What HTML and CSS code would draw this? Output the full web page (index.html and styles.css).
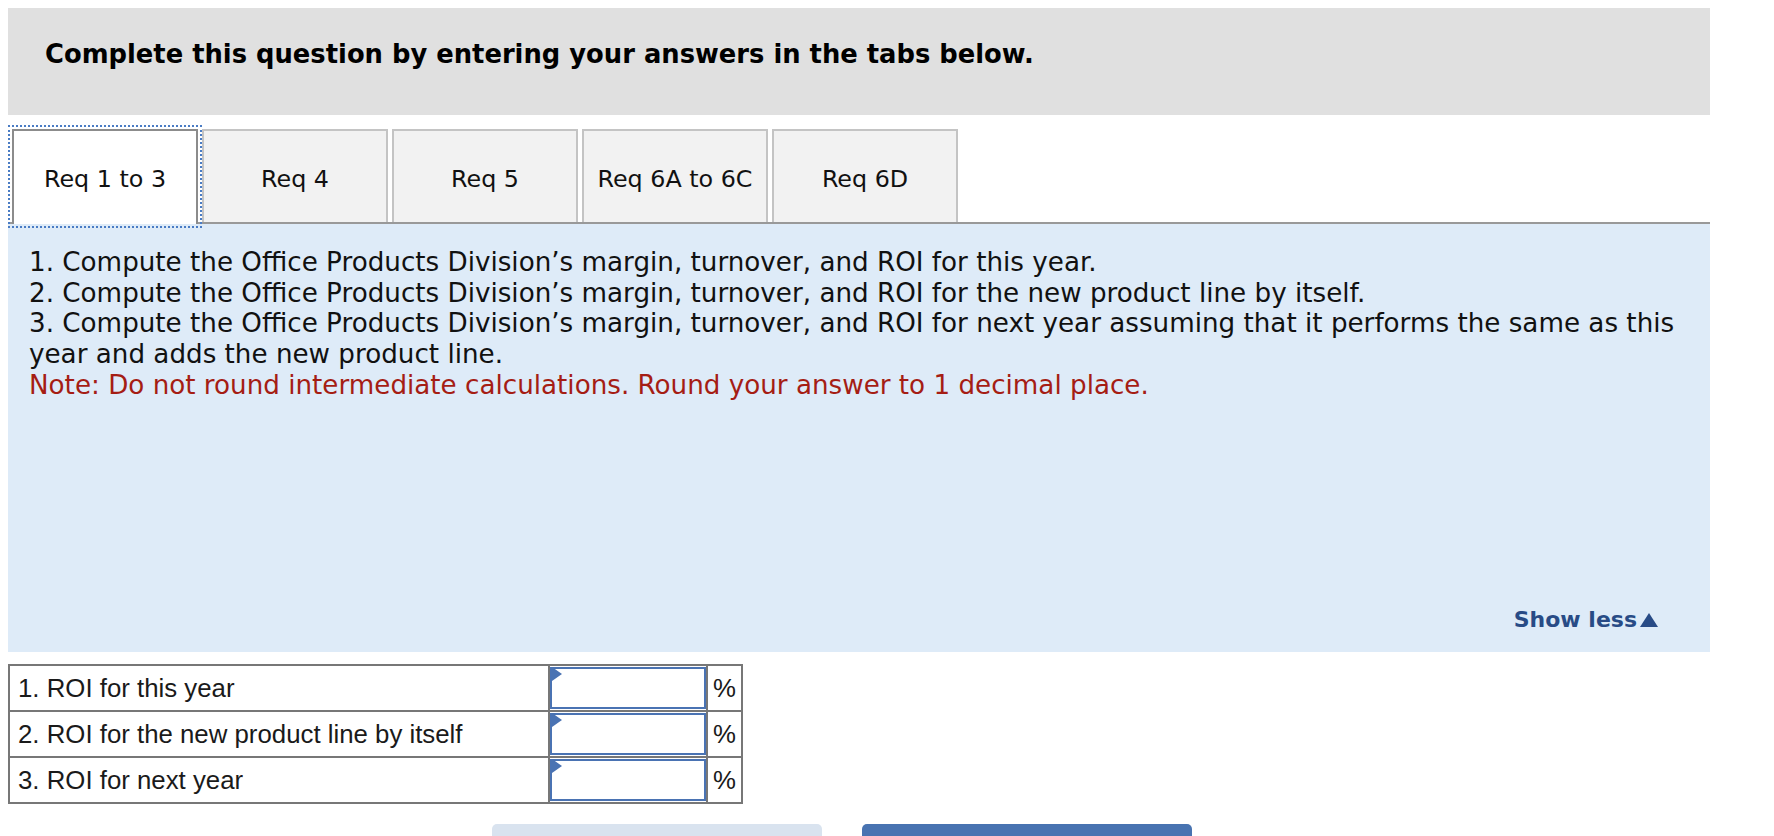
FILE: index.html
```html
<!DOCTYPE html>
<html lang="en">
<head>
<meta charset="utf-8">
<title>Req 1 to 3</title>
<link rel="stylesheet" href="styles.css">
</head>
<body>
<div class="instructions">
  <h1 class="instructions-title">Complete this question by entering your answers in the tabs below.</h1>
</div>

<div class="tabs" role="tablist">
  <button class="tab tab-active" role="tab">Req 1 to 3</button>
  <button class="tab" role="tab">Req 4</button>
  <button class="tab" role="tab">Req 5</button>
  <button class="tab" role="tab">Req 6A to 6C</button>
  <button class="tab" role="tab">Req 6D</button>
</div>

<div class="panel">
  <div class="panel-text">
    <p class="req-line">1. Compute the Office Products Division’s margin, turnover, and ROI for this year.</p>
    <p class="req-line">2. Compute the Office Products Division’s margin, turnover, and ROI for the new product line by itself.</p>
    <p class="req-line">3. Compute the Office Products Division’s margin, turnover, and ROI for next year assuming that it performs the same as this year and adds the new product line.</p>
    <p class="req-line note">Note: Do not round intermediate calculations. Round your answer to 1 decimal place.</p>
  </div>
  <div class="show-less-row">
    <a class="show-less" href="#">Show less<svg class="show-less-icon" width="18" height="14" viewBox="0 0 18 14" aria-hidden="true"><polygon points="9,0 18,14 0,14" fill="currentColor"/></svg></a>
  </div>
</div>

<table class="answers">
  <tr>
    <td class="label-cell">1. ROI for this year</td>
    <td class="input-cell"><div class="input-wrap"><span class="flag"></span><input class="answer-input" type="text" aria-label="ROI for this year"></div></td>
    <td class="unit-cell">%</td>
  </tr>
  <tr>
    <td class="label-cell">2. ROI for the new product line by itself</td>
    <td class="input-cell"><div class="input-wrap"><span class="flag"></span><input class="answer-input" type="text" aria-label="ROI for the new product line by itself"></div></td>
    <td class="unit-cell">%</td>
  </tr>
  <tr>
    <td class="label-cell">3. ROI for next year</td>
    <td class="input-cell"><div class="input-wrap"><span class="flag"></span><input class="answer-input" type="text" aria-label="ROI for next year"></div></td>
    <td class="unit-cell">%</td>
  </tr>
</table>

<div class="nav">
  <button class="nav-btn nav-prev" aria-label="Previous: Req 1 to 3"></button>
  <button class="nav-btn nav-next" aria-label="Next: Req 4"></button>
</div>
</body>
</html>
```
FILE: styles.css
```css
html, body {
  background: #ffffff;
}
body {
  margin: 8px 8px 0 8px;
  width: 1702px;
  font-family: "DejaVu Sans", Verdana, sans-serif;
  color: #111111;
}

.instructions {
  background: #e0e0e0;
  height: 107px;
  box-sizing: border-box;
  padding: 31px 0 0 37px;
}
.instructions-title {
  margin: 0;
  font-family: "DejaVu Sans", Verdana, sans-serif;
  font-weight: bold;
  font-size: 25.8px;
  line-height: 30px;
  color: #000000;
}

.tabs {
  display: flex;
  align-items: flex-end;
  margin-top: 14px;
  padding-left: 4px;
  border-bottom: 2px solid #999999;
  height: 93px;
}
.tab {
  box-sizing: border-box;
  width: 186px;
  height: 93px;
  margin-right: 4px;
  background: #f2f2f2;
  border: 2px solid #c4c4c4;
  border-bottom: none;
  font-family: "DejaVu Sans", Verdana, sans-serif;
  font-size: 23.8px;
  color: #111111;
  padding: 4px 0 0 0;
  cursor: pointer;
}
.tab-active {
  background: #ffffff;
  border-color: #8c8c8c;
  height: 95px;
  margin-bottom: -2px;
  padding-top: 2px;
  outline: 2px dotted #4a7cc4;
  outline-offset: 2px;
}

.panel {
  background: #deebf8;
  height: 428px;
  box-sizing: border-box;
  padding: 23px 21px 19px 21px;
  display: flex;
  flex-direction: column;
}
.panel-text {
  font-size: 26.2px;
  line-height: 30.7px;
  color: #111111;
}
.req-line {
  margin: 0;
}
.note {
  color: #a51d14;
}
.show-less-row {
  margin-top: auto;
  display: flex;
  justify-content: flex-end;
  padding-right: 31px;
}
.show-less {
  font-weight: bold;
  font-size: 22px;
  line-height: 26px;
  color: #284b86;
  text-decoration: none;
  display: flex;
  align-items: baseline;
}
.show-less-icon {
  margin-left: 3px;
  color: #284b86;
}

.answers {
  margin-top: 12px;
  border-collapse: collapse;
  border: 2px solid #777777;
  font-family: "Liberation Sans", Arial, sans-serif;
  font-size: 25.8px;
  color: #1a1a1a;
}
.answers td {
  border: 2px solid #777777;
  height: 44px;
  padding: 0;
  box-sizing: border-box;
}
.label-cell {
  width: 540px;
  padding: 0 0 0 8px !important;
  vertical-align: middle;
}
.input-cell {
  width: 156px;
  vertical-align: top;
}
.unit-cell {
  width: 35px;
  text-align: center;
  vertical-align: middle;
}
.input-wrap {
  position: relative;
  height: 43px;
  margin-top: 1px;
}
.answer-input {
  box-sizing: border-box;
  width: 156px;
  height: 42px;
  border: 2px solid #4a73b3;
  margin: 0;
  padding: 0 6px;
  background: #ffffff;
  font-size: 20px;
  outline: none;
  display: block;
}
.flag {
  position: absolute;
  left: 2px;
  top: 0;
  width: 0;
  height: 0;
  border-top: 7px solid transparent;
  border-bottom: 7px solid transparent;
  border-left: 10px solid #4a73b3;
}

.nav {
  margin-top: 20px;
  height: 12px;
  overflow: hidden;
  display: flex;
  gap: 40px;
  padding-left: 484px;
}
.nav-btn {
  width: 330px;
  height: 44px;
  border: none;
  border-radius: 5px;
  padding: 0;
}
.nav-prev {
  background: #d9e3ef;
}
.nav-next {
  background: #4873b1;
}
```
